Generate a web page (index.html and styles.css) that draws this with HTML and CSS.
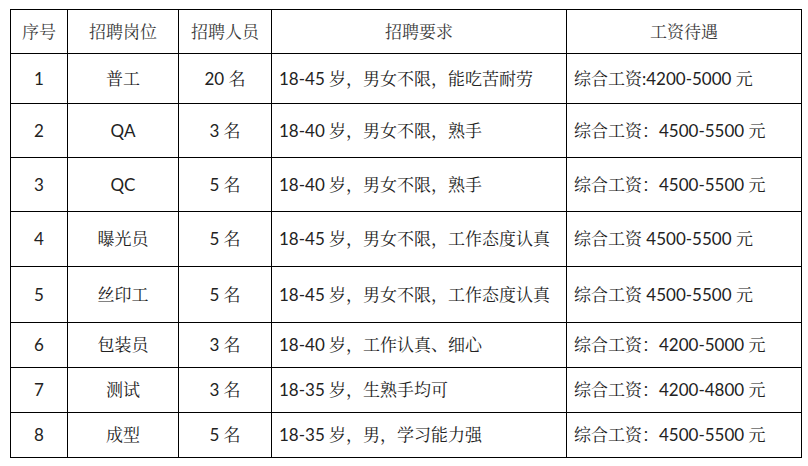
FILE: index.html
```html
<!DOCTYPE html>
<html lang="zh-CN">
<head>
<meta charset="utf-8">
<title>招聘信息</title>
<link rel="stylesheet" href="styles.css">
</head>
<body>
<table class="jobs">
  <colgroup>
    <col class="c1"><col class="c2"><col class="c3"><col class="c4"><col class="c5">
  </colgroup>
  <thead>
    <tr class="head">
      <th>序号</th><th>招聘岗位</th><th>招聘人员</th><th>招聘要求</th><th>工资待遇</th>
    </tr>
  </thead>
  <tbody>
    <tr class="r50"><td class="ctr">1</td><td class="ctr">普工</td><td class="ctr">20 名</td><td>18-45 岁，男女不限，能吃苦耐劳</td><td>综合工资:4200-5000 元</td></tr>
    <tr class="r54"><td class="ctr">2</td><td class="ctr">QA</td><td class="ctr">3 名</td><td>18-40 岁，男女不限，熟手</td><td>综合工资：4500-5500 元</td></tr>
    <tr class="r54"><td class="ctr">3</td><td class="ctr">QC</td><td class="ctr">5 名</td><td>18-40 岁，男女不限，熟手</td><td>综合工资：4500-5500 元</td></tr>
    <tr class="r55"><td class="ctr">4</td><td class="ctr">曝光员</td><td class="ctr">5 名</td><td>18-45 岁，男女不限，工作态度认真</td><td>综合工资 4500-5500 元</td></tr>
    <tr class="r56"><td class="ctr">5</td><td class="ctr">丝印工</td><td class="ctr">5 名</td><td>18-45 岁，男女不限，工作态度认真</td><td>综合工资 4500-5500 元</td></tr>
    <tr class="r45"><td class="ctr">6</td><td class="ctr">包装员</td><td class="ctr">3 名</td><td>18-40 岁，工作认真、细心</td><td>综合工资：4200-5000 元</td></tr>
    <tr class="r45"><td class="ctr">7</td><td class="ctr">测试</td><td class="ctr">3 名</td><td>18-35 岁，生熟手均可</td><td>综合工资：4200-4800 元</td></tr>
    <tr class="r45"><td class="ctr">8</td><td class="ctr">成型</td><td class="ctr">5 名</td><td>18-35 岁，男，学习能力强</td><td>综合工资：4500-5500 元</td></tr>
  </tbody>
</table>
</body>
</html>
```
FILE: styles.css
```css
html, body {
  margin: 0;
  padding: 0;
  background: #ffffff;
}
body {
  padding: 9px 0 0 10px;
}
.jobs {
  border-collapse: collapse;
  table-layout: fixed;
  width: 791px;
  font-family: "Lato", "Noto Serif CJK SC", "Noto Sans CJK SC", sans-serif;
  font-size: 17px;
  color: #222;
}
.c1 { width: 57px; }
.c2 { width: 111px; }
.c3 { width: 93px; }
.c4 { width: 295px; }
.c5 { width: 235px; }
.jobs th, .jobs td {
  border: 1px solid #000;
  padding: 0 0 0 7px;
  vertical-align: middle;
  text-align: left;
  white-space: nowrap;
  font-weight: normal;
  line-height: 20px;
}
.jobs th, .jobs td.ctr {
  text-align: center;
  padding: 0;
}
.jobs th {
  color: #3a3a3a;
}
.head { height: 44px; }
.r50 { height: 50px; }
.r54 { height: 54px; }
.r55 { height: 55px; }
.r56 { height: 56px; }
.r45 { height: 45px; }
```
